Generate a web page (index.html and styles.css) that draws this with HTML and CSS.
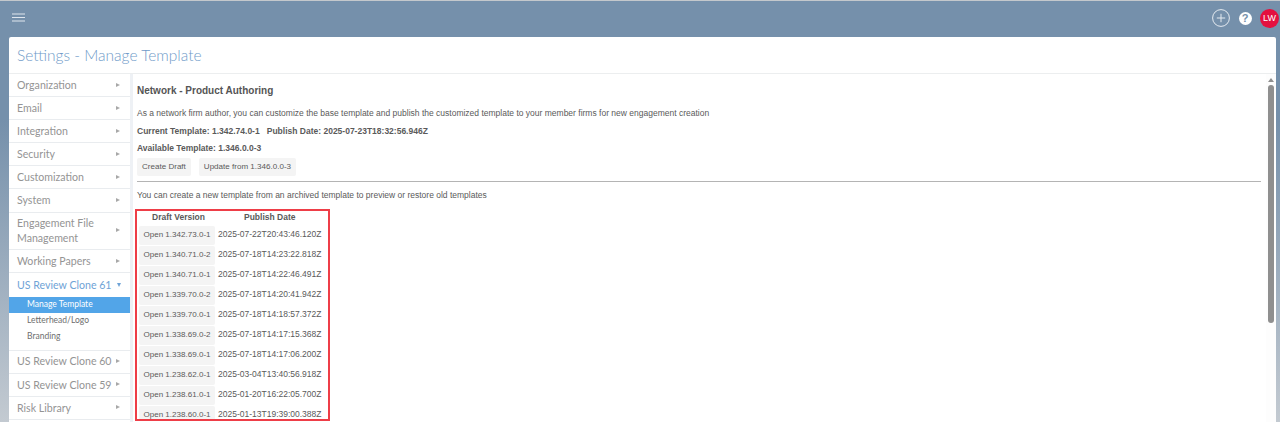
FILE: index.html
```html
<!DOCTYPE html>
<html lang="en">
<head>
<meta charset="utf-8">
<title>Settings - Manage Template</title>
<link rel="stylesheet" href="styles.css">
</head>
<body>
<header class="topbar">
  <svg class="burger" width="13" height="10" viewBox="0 0 13 10"><path d="M0 1h13M0 4.5h13M0 8h13" stroke="#dfe6ee" stroke-width="1.2" fill="none"/></svg>
  <div class="top-actions">
    <svg width="18" height="18" viewBox="0 0 18 18"><circle cx="9" cy="9" r="8.4" fill="none" stroke="#e4eaf0" stroke-width="1"/><path d="M9 4.8v8.4M4.8 9h8.4" stroke="#e4eaf0" stroke-width="1"/></svg>
    <span class="help">?</span>
    <span class="avatar">LW</span>
  </div>
</header>
<main class="card">
  <h1 class="title">Settings - Manage Template</h1>
  <div class="body">
    <nav class="side">
      <a class="item">Organization<i class="arr"></i></a>
      <a class="item">Email<i class="arr"></i></a>
      <a class="item">Integration<i class="arr"></i></a>
      <a class="item">Security<i class="arr"></i></a>
      <a class="item">Customization<i class="arr"></i></a>
      <a class="item">System<i class="arr"></i></a>
      <a class="item two">Engagement File Management<i class="arr"></i></a>
      <a class="item">Working Papers<i class="arr"></i></a>
      <div class="group">
        <a class="item open">US Review Clone 61<i class="arr down"></i></a>
        <a class="sub active">Manage Template</a>
        <a class="sub">Letterhead/Logo</a>
        <a class="sub">Branding</a>
      </div>
      <a class="item">US Review Clone 60<i class="arr"></i></a>
      <a class="item">US Review Clone 59<i class="arr"></i></a>
      <a class="item">Risk Library<i class="arr"></i></a>
    </nav>
    <section class="content">
      <h2 class="head">Network - Product Authoring</h2>
      <p class="intro">As a network firm author, you can customize the base template and publish the customized template to your member firms for new engagement creation</p>
      <p class="strong">Current Template: 1.342.74.0-1 &nbsp; Publish Date: 2025-07-23T18:32:56.946Z</p>
      <p class="strong">Available Template: 1.346.0.0-3</p>
      <div class="actions">
        <button class="btn">Create Draft</button>
        <button class="btn">Update from 1.346.0.0-3</button>
      </div>
      <hr class="rule">
      <p class="note">You can create a new template from an archived template to preview or restore old templates</p>
      <div class="boxed">
        <table class="drafts">
          <thead><tr><th>Draft Version</th><th>Publish Date</th></tr></thead>
          <tbody>
            <tr><td><button class="btn">Open 1.342.73.0-1</button></td><td>2025-07-22T20:43:46.120Z</td></tr>
            <tr><td><button class="btn">Open 1.340.71.0-2</button></td><td>2025-07-18T14:23:22.818Z</td></tr>
            <tr><td><button class="btn">Open 1.340.71.0-1</button></td><td>2025-07-18T14:22:46.491Z</td></tr>
            <tr><td><button class="btn">Open 1.339.70.0-2</button></td><td>2025-07-18T14:20:41.942Z</td></tr>
            <tr><td><button class="btn">Open 1.339.70.0-1</button></td><td>2025-07-18T14:18:57.372Z</td></tr>
            <tr><td><button class="btn">Open 1.338.69.0-2</button></td><td>2025-07-18T14:17:15.368Z</td></tr>
            <tr><td><button class="btn">Open 1.338.69.0-1</button></td><td>2025-07-18T14:17:06.200Z</td></tr>
            <tr><td><button class="btn">Open 1.238.62.0-1</button></td><td>2025-03-04T13:40:56.918Z</td></tr>
            <tr><td><button class="btn">Open 1.238.61.0-1</button></td><td>2025-01-20T16:22:05.700Z</td></tr>
            <tr><td><button class="btn">Open 1.238.60.0-1</button></td><td>2025-01-13T19:39:00.388Z</td></tr>
          </tbody>
        </table>
      </div>
    </section>
    <div class="scrollbar"><span class="up"></span><span class="thumb"></span></div>
  </div>
</main>
</body>
</html>
```
FILE: styles.css
```css
* { box-sizing: border-box; }
html, body { height: 100%; }
body {
  margin: 0;
  height: 422px;
  overflow: hidden;
  display: flex;
  flex-direction: column;
  border-top: 1px solid #c4c8cc;
  background: linear-gradient(#7590ab 0, #7590ab 120px, #c3cad1 422px);
  font-family: "Liberation Sans", Arial, sans-serif;
  color: #4a4a4a;
}
.topbar {
  height: 36px;
  flex: none;
  display: flex;
  align-items: center;
  justify-content: space-between;
  padding: 0 1px 2px 12px;
}
.top-actions { display: flex; align-items: center; gap: 8.5px; }
.help {
  width: 13px; height: 13px; border-radius: 50%;
  background: #fff; color: #7590ab;
  font: bold 11px/13px "Liberation Sans", sans-serif;
  text-align: center;
}
.avatar {
  width: 19px; height: 19px; border-radius: 50%;
  background: #e4103f; color: #fff;
  font: 9px/19px "Liberation Sans", sans-serif;
  text-align: center;
}
.card {
  flex: 1;
  min-height: 0;
  margin: 0 4px 0 9px;
  background: #fff;
  border-radius: 2px 2px 0 0;
  display: flex;
  flex-direction: column;
}
.title {
  margin: 0;
  height: 37px;
  flex: none;
  padding: 0 8px;
  font: 300 15.5px/37px Lato, sans-serif;
  color: #6f9bc9;
  border-bottom: 1px solid #eceeef;
}
.body { flex: 1; min-height: 0; display: flex; }
.side {
  flex: none;
  overflow: hidden;
  border-right: 3px solid #eef1f5;
  box-sizing: content-box;
  width: 121px;
}
.item {
  display: flex;
  position: relative;
  align-items: center;
  min-height: 23.1px;
  padding: 1px 22px 0 8px;
  font: 400 10.6px/15.5px Lato, sans-serif;
  color: #949494;
  white-space: nowrap;
  border-bottom: 1px solid #e9ecef;
}
.two { min-height: 37.8px; white-space: normal; }
.arr {
  position: absolute;
  right: 10px;
  top: 50%;
  margin-top: -2.5px;
  width: 0;
  height: 0;
  border-left: 4px solid #a8a8a8;
  border-top: 2.5px solid transparent;
  border-bottom: 2.5px solid transparent;
}
.group { padding-bottom: 5.1px; border-bottom: 1px solid #e9ecef; }
.open { color: #6fa3d6; border-bottom: 0; padding-right: 0; }
.down {
  right: 9px;
  margin-top: -2px;
  border-left: 2.5px solid transparent;
  border-right: 2.5px solid transparent;
  border-top: 4px solid #6fa3d6;
  border-bottom: 0;
}
.sub {
  display: block;
  height: 16px;
  padding-left: 18px;
  font: 400 8.5px/15px Lato, sans-serif;
  color: #6e6e6e;
}
.active { background: #52a5e8; color: #fff; }
.content {
  flex: 1;
  min-width: 0;
  padding: 10px 0 0 4px;
  overflow: hidden;
}
.head { margin: 0 0 10px; font: bold 10px/13px "Liberation Sans", sans-serif; color: #555; }
.intro, .note { margin: 0; font-size: 8.5px; line-height: 12px; color: #5a5a5a; }
.intro { margin-bottom: 6px; }
.strong { margin: 0 0 4.6px; font-size: 8.5px; font-weight: bold; line-height: 12px; color: #5a5a5a; }
.actions { display: flex; gap: 8px; }
.btn {
  border: 0;
  border-radius: 2px;
  background: #f4f4f4;
  padding: 0 5px;
  height: 18px;
  font: 8.05px/18px "Liberation Sans", sans-serif;
  color: #5a5a5a;
}
.rule { margin: 5px 5px 7px 0; border: 0; border-top: 1px solid #b4b4b4; }
.note { margin-bottom: 8px; }
.boxed {
  display: inline-block;
  margin-left: -2px;
  border: 2px solid #ee3e48;
  padding: 0 6px 0 2px;
  height: 212px;
  overflow: hidden;
}
.drafts { border-collapse: collapse; font-size: 8.5px; color: #5a5a5a; }
.drafts th { height: 15px; padding: 0; font-weight: bold; text-align: center; line-height: 12px; vertical-align: top; }
.drafts td { height: 20px; padding: 0; vertical-align: top; }
.drafts td:first-child { padding-right: 3px; }
.drafts td:last-child { line-height: 16px; }
.drafts .btn { display: block; width: 76px; height: 19px; padding: 0 0 2px; line-height: 17px; text-align: center; }
.scrollbar {
  width: 10px;
  flex: none;
  background: #fdfdfd;
  display: flex;
  flex-direction: column;
  align-items: center;
  padding-top: 4px;
}
.up { width: 0; height: 0; border: 3px solid transparent; border-top: 0; border-bottom: 4px solid #8f8f8f; margin-bottom: 3px; }
.thumb { width: 6px; height: 238px; border-radius: 3px; background: #8f8f8f; }
```
